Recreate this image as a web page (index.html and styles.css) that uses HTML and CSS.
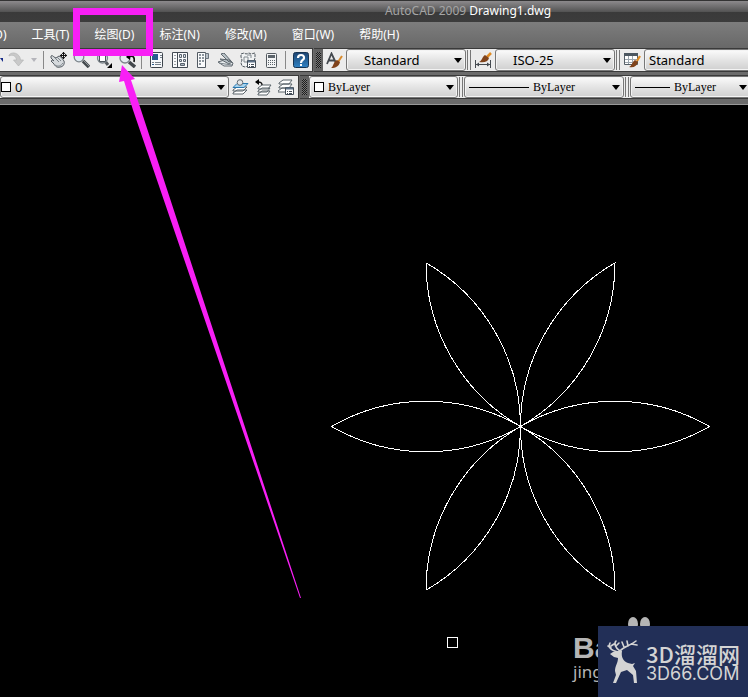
FILE: index.html
```html
<!DOCTYPE html>
<html lang="zh-CN">
<head>
<meta charset="utf-8">
<meta name="viewport" content="width=device-width">
<title>AutoCAD 2009 Drawing1.dwg</title>
<link rel="stylesheet" href="styles.css">
</head>
<body>
<header>
  <h1 class="title"><span class="app">AutoCAD 2009</span> Drawing1.dwg</h1>
  <nav class="menu">
    <button type="button">格式(O)</button>
    <button type="button">工具(T)</button>
    <button type="button">绘图(D)</button>
    <button type="button">标注(N)</button>
    <button type="button">修改(M)</button>
    <button type="button">窗口(W)</button>
    <button type="button">帮助(H)</button>
  </nav>
  <div class="row">
    <div class="bar">
      <button type="button" class="drop clipped" aria-label="Undo list"><svg width="6" height="4"><path fill="#152a88" d="M0 0h6L3 4z"/></svg></button>
      <button type="button" class="tool" aria-label="Redo"><svg width="16" height="16"><path fill="#c9c9c9" stroke="#b4b6b6" stroke-width=".7" d="M1 3C4-1 12 1 12.500 8h3L10.500 14 5.500 8h3C8 4 5 2 1 4z"/></svg></button>
      <button type="button" class="drop" aria-label="Redo list"><svg width="6" height="4"><path fill="#b5b5bb" d="M0 0h6L3 4z"/></svg></button>
      <i class="sep"></i>
      <button type="button" class="tool" aria-label="Pan"><svg width="17" height="17"><path fill="#d5d9dc" stroke="#555c63" d="M1 4c1-1 2 0 3 1l2 1 3-2 2 1 3 4c1 3-1 6-4 6-3 1-5-1-6-3L1 9c1-1 2-1 3 0L1 6z"/><path fill="none" stroke="#7d858b" d="M5 6l4 4M7 5l4 4M5 13c3 2 6 1 8-2"/><path stroke="#111" d="M13.500 0v7M10 3.500h7"/><path fill="#111" d="M11.500 2l2-2 2 2zM11.500 5l2 2 2-2zM12 1.500l-2 2 2 2zM15 1.500l2 2-2 2z"/></svg></button>
      <button type="button" class="tool" aria-label="Zoom realtime"><svg width="17" height="16"><path stroke="#44494d" stroke-width="3.500" d="M10 9l6 6"/><path stroke="#90969a" d="M11 9l5 5"/><circle cx="6" cy="5" r="4.800" fill="#dfebf3" stroke="#7d858b" stroke-width="1.300"/></svg></button>
      <button type="button" class="tool" aria-label="Zoom window"><svg width="17" height="16"><path stroke="#54595d" stroke-width="3" d="M9 9l3 4"/><circle cx="6.500" cy="6" r="5" fill="#e5ebef" stroke="#7d858b" stroke-width="1.300"/><path fill="#fff" stroke="#4e565c" d="M3.500 3.500h6v6h-6z"/><path d="M16 11v5h-5z"/></svg></button>
      <button type="button" class="tool" aria-label="Zoom previous"><svg width="17" height="16"><path stroke="#44494d" stroke-width="3.500" d="M10 10l6 5"/><circle cx="6" cy="6" r="5" fill="#e5ebef" stroke="#7d858b" stroke-width="1.300"/><path fill="none" stroke="#111" stroke-width="1.600" d="M10 5c4-2 6 0 5 5"/><path d="M11 1v7L7 5z"/></svg></button>
      <i class="sep"></i>
      <button type="button" class="tool" aria-label="Properties"><svg width="13" height="16"><rect x=".5" y=".5" width="12" height="15" rx="1" fill="#f7f9fb" stroke="#3d444c"/><path fill="#275b8e" d="M2 2h6v6H2z"/><path stroke="#76808a" d="M10 3.500h2M10 5.500h2M2 10.500h2M5 10.500h6M5 12.500h6"/><path stroke="#275b8e" d="M2 12.500h2"/></svg></button>
      <button type="button" class="tool" aria-label="DesignCenter"><svg width="16" height="16"><path fill="#fafbfc" stroke="#434b54" d="M.500.500h15v15H.500zM5.500.500v15"/><path fill="#dfe5ea" stroke="#59636e" d="M7.500 2.500h2v3h-2zM11.500 2.500h2v3h-2zM7.500 7.500h2v2h-2zM11.500 7.500h2v2h-2z"/><path fill="#a9b5c0" stroke="#59636e" d="M8.500 11.500h4v2h-4z"/><path stroke="#434b54" stroke-dasharray="1 2" d="M3 3v11"/></svg></button>
      <button type="button" class="tool" aria-label="Tool palettes"><svg width="12" height="16"><path fill="#fafbfc" stroke="#535b63" d="M.500.500h8v15h-8z"/><path fill="#b8c0c7" stroke="#6b747d" d="M8.500 1.500h3v5h-3z"/><path fill="#8c959d" d="M2 2h2v2H2zM5 2h2v2H5zM2 5h2v2H2zM5 5h2v2H5zM2 8h2v2H2zM5 8h2v2H5zM2 11h2v2H2z"/></svg></button>
      <button type="button" class="tool" aria-label="Sheet set manager"><svg width="17" height="14"><path fill="#e9edef" stroke="#5e676e" d="M1 9l10-3 5 4-1 3H7z"/><path fill="#bac3c8" stroke="#5e676e" d="M3 6l9 1 3 2-3 2zM4 1l3-1 7 8-2 1z"/><path fill="none" stroke="#7a838a" d="M2 10l6 1 7 1"/></svg></button>
      <button type="button" class="tool" aria-label="Markup set manager"><svg width="17" height="17"><path fill="#f1f3f4" stroke="#515960" stroke-dasharray="3 1" d="M1 2l3-1 2 1 3-1 2 1 4-1v5l-1 3-6 1v4l-3 1-3-1-1-3 1-3-1-3z"/><path fill="none" stroke="#828a90" d="M4 5h4v5H4zM7 3h4v3"/><path fill="#fff" stroke="#434d57" d="M7.500 8.500h8v7h-8z"/><path stroke="#5c7187" stroke-width="2" d="M8 9.500h7"/><path stroke="#434d57" d="M9 12.500h1M11 12.500h3M9 14.500h1M11 14.500h3"/></svg></button>
      <button type="button" class="tool" aria-label="QuickCalc"><svg width="11" height="15"><rect x=".5" y=".5" width="10" height="14" rx="1" fill="#f3f4f5" stroke="#555b61"/><path fill="#5c646b" d="M2 2h7v3H2z"/><path stroke="#5c646b" stroke-width="1" stroke-dasharray="1 1" d="M2 7.500h7M2 9.500h7M2 11.500h7"/></svg></button>
      <i class="sep"></i>
      <button type="button" class="tool" aria-label="Help"><svg width="16" height="16"><defs><linearGradient id="help" x2="0" y2="1"><stop stop-color="#1d4370"/><stop offset="1" stop-color="#2f82c4"/></linearGradient></defs><rect x=".5" y=".5" width="15" height="15" rx="2" fill="url(#help)" stroke="#173453"/><path fill="none" stroke="#fff" stroke-width="2.200" d="M5 6c0-4 6.500-4 6 0 0 2-3 2-3 5"/><path fill="#fff" d="M7 12h2v2H7z"/></svg></button>
    </div>
    <div class="bar grow">
      <i class="grip"></i>
      <button type="button" class="tool" aria-label="Text style"><svg width="17" height="17"><path fill="none" stroke="#43484e" stroke-width="1.800" d="M1 12L5.500 1.500 10 11M3 8.500h6"/><path stroke="#d88a2c" stroke-width="2" d="M16 4l-4 6"/><path fill="#80431b" d="M11 8l3 2c-1 4-4 6-9 6 3-2 2-6 6-8z"/></svg></button>
      <div class="field style"><select aria-label="Text style name"><option>Standard</option></select><svg class="arrow" width="8" height="5"><path d="M0 0h8L4 5z"/></svg></div>
      <i class="rails"></i>
      <button type="button" class="tool" aria-label="Dimension style"><svg width="17" height="16"><path stroke="#454a50" d="M.500 8v8M15.500 8v8M1 12.500h14"/><path fill="#454a50" d="M1 12.500l3-2v4zM15 12.500l-3-2v4z"/><path stroke="#e08b22" stroke-width="2.500" d="M16 1l-4 4"/><path fill="#80431b" d="M10 3l4 3c-1 4-5 5-10 4 3-1 3-5 6-7z"/></svg></button>
      <div class="field style"><select aria-label="Dimension style name"><option>ISO-25</option></select><svg class="arrow" width="8" height="5"><path d="M0 0h8L4 5z"/></svg></div>
      <i class="rails"></i>
      <button type="button" class="tool" aria-label="Table style"><svg width="17" height="16"><path fill="#fff" stroke="#555e66" d="M.500 1.500h13v11H.500z"/><path fill="#4c5760" d="M0 1h14v3H0z"/><path stroke="#9ba5ad" d="M4.500 4v8M8.500 4v8M1 7.500h12M1 10.500h12"/><path stroke="#e08b22" stroke-width="2.200" d="M16 4l-3 5"/><path fill="#80431b" d="M11 8l3 2c-1 4-4 6-9 5 3-1 3-5 6-7z"/></svg></button>
      <div class="field last"><select aria-label="Table style name"><option>Standard</option></select></div>
    </div>
  </div>
  <div class="row">
    <div class="bar">
      <div class="field layer"><i class="swatch"></i><select aria-label="Layer"><option>0</option></select><svg class="arrow" width="8" height="5"><path d="M0 0h8L4 5z"/></svg></div>
      <button type="button" class="tool" aria-label="Make object's layer current"><svg width="17" height="17"><path fill="#fff" stroke="#5b646b" d="M1 14l4-3h10l-4 4H1zM1 11l4-3h10l-4 4H1z"/><path fill="#a7d3ee" stroke="#2878b0" d="M1 8.500l4-4h11l-4 4z"/><circle cx="8" cy="3.500" r="2.800" fill="#e3e6e8" stroke="#646c73"/></svg></button>
      <button type="button" class="tool" aria-label="Layer previous"><svg width="17" height="17"><path fill="#fff" stroke="#5b646b" d="M3 15l4-3h8l-3 4H3zM3 12l4-3h8l-3 4H3zM3 9l4-3h9l-3 4H3z"/><path fill="none" stroke="#111" stroke-width="1.300" d="M7 6c0-2-1-3-4-3"/><path d="M4 0v6L0 3z"/></svg></button>
      <button type="button" class="tool" aria-label="Layer states"><svg width="17" height="17"><path fill="#fff" stroke="#5b646b" d="M0 12l4-3h9l-3 4H0zM1 8l4-3h9l-3 4H1zM1 4l4-3h9l-3 4H1z"/><path fill="#fff" stroke="#434d57" d="M7.500 8.500h8v7h-8z"/><path stroke="#5c7187" stroke-width="2" d="M8 9.500h7"/><path stroke="#434d57" d="M9 12.500h1M11 12.500h3M9 14.500h1M11 14.500h3"/></svg></button>
    </div>
    <div class="bar grow serif">
      <i class="grip"></i>
      <div class="field color"><i class="swatch"></i><select aria-label="Color"><option>ByLayer</option></select><svg class="arrow" width="8" height="5"><path d="M0 0h8L4 5z"/></svg></div>
      <i class="rails"></i>
      <div class="field linetype"><i class="line"></i><select aria-label="Linetype"><option>ByLayer</option></select><svg class="arrow" width="8" height="5"><path d="M0 0h8L4 5z"/></svg></div>
      <i class="rails"></i>
      <div class="field last"><i class="line short"></i><select aria-label="Lineweight"><option>ByLayer</option></select><svg class="arrow" width="8" height="5"><path d="M0 0h8L4 5z"/></svg></div>
    </div>
  </div>
</header>
<main class="canvas">
  <svg class="flower" width="381" height="331" viewBox="-190.500 -165.500 381 331" role="img" aria-label="Six-petal flower">
    <defs><path id="petal" d="M0 0A189 189 0 0 1 189 0A189 189 0 0 1 0 0"/></defs>
    <use href="#petal"/><use href="#petal" transform="rotate(60)"/><use href="#petal" transform="rotate(120)"/><use href="#petal" transform="rotate(180)"/><use href="#petal" transform="rotate(240)"/><use href="#petal" transform="rotate(300)"/>
  </svg>
  <i class="pickbox"></i>
  <div class="baidu">
    <svg width="24" height="18"><ellipse cx="6" cy="8" rx="5" ry="7"/><ellipse cx="18" cy="8" rx="5" ry="7"/></svg>
    <b>Ba</b><span>jing</span>
  </div>
  <div class="brand">
    <svg width="34" height="46" viewBox="0 0 34 46"><path fill="#d4d4d4" d="M12 12L7 13 4 15l4 3 4 1c0 5-3 8-3 13l1 4-3 8h3l5-11 6-2 6 5 1 8h3l-1-12-3-5 2-3-3 1-4-1c-5-2-7-6-6-12z"/><path fill="none" stroke="#d4d4d4" stroke-width="1.600" stroke-linecap="round" d="M12 13C4 11 2 8 4 4M5 9L2 7M14 12C9 9 8 4 10 2M10 7L13 4M14 12c4-5 10-5 16-10M18 8l-2-5M22 7l-1-5M25 5l6 1M5 7l3-2"/></svg>
    <div class="words"><strong>3D溜溜网</strong><span>3D66.COM</span></div>
  </div>
</main>
<svg class="callout" width="310" height="600" aria-hidden="true"><path fill="none" stroke="#f81ff5" stroke-width="7" d="M76.500 11.500h73v41h-73z"/><path fill="#f81ff5" d="M122 65l13 14-4 1 10 30L301 598h-1L133 110l-9-29-5 1z"/></svg>
</body>
</html>
```
FILE: styles.css
```css
* { box-sizing: border-box; }

body {
  margin: 0;
  min-height: 100vh;
  display: flex;
  flex-direction: column;
  position: relative;
  overflow: hidden;
  background: #000;
  font: 13px "Noto Sans", "Noto Sans CJK SC", sans-serif;
}

button, select {
  font: inherit;
  border: 0;
  padding: 0;
  margin: 0;
  background: none;
  appearance: none;
}

header {
  background: #6b6b6b;
  border-bottom: 1px solid #999;
  padding-bottom: 5px;
}

.title {
  margin: 0;
  height: 22px;
  padding-left: 188px;
  border-top: 1px solid #333;
  background: linear-gradient(#8c8a8c, #555 50%, #3a3a3a 52%, #3c3c3c);
  color: #fff;
  font-size: 12px;
  font-weight: 400;
  line-height: 20px;
  text-align: center;
}

.app { color: #a5a5a5; }

.menu {
  display: flex;
  gap: 25px;
  height: 26px;
  padding-left: 0;
  margin-left: -34px;
  background: linear-gradient(#7d7d7d, #686868);
  color: #fff;
  font-size: 12px;
}

.menu button {
  color: inherit;
  white-space: nowrap;
  line-height: 24px;
}

.row {
  display: flex;
  gap: 1px;
  overflow: hidden;
}

.row + .row { margin-top: 3px; }

.bar {
  display: flex;
  flex: none;
  align-items: center;
  height: 24px;
  border: solid #3a3a3a;
  border-width: 1px 1px 1px 0;
  background: #ececec;
}

.grow { flex: 1 0 0; border-right: 0; }

.tool {
  flex: none;
  display: flex;
  align-items: center;
  justify-content: center;
  width: 23px;
  height: 22px;
}

.drop {
  display: flex;
  justify-content: center;
  width: 14px;
}

.clipped { width: 4px; justify-content: flex-end; overflow: hidden; padding-right: 1px; }

.sep {
  width: 6px;
  height: 18px;
  border: solid transparent;
  border-width: 0 3px 0 2px;
  background: #888;
  background-clip: padding-box;
}

.grip {
  flex: none;
  align-self: stretch;
  width: 9px;
  border: solid #626262;
  border-width: 3px 2px;
  background: repeating-conic-gradient(#1c1c1c 0 25%, #777 0 50%) 0 0 / 2px 2px;
}

.rails {
  flex: none;
  width: 6px;
  height: 20px;
  border: solid #ececec;
  border-width: 0 1px;
  background: linear-gradient(90deg, #777 1px, #ececec 1px 3px, #777 3px);
}

.field {
  flex: none;
  display: flex;
  align-items: center;
  height: 22px;
  border: 1px solid #777;
  border-radius: 3px;
  background: linear-gradient(#fbfbfb, #e4e4e4 50%, #d0d0d0);
  box-shadow: inset 0 0 0 1px #f3f3f3;
}

.field select {
  flex: 1;
  min-width: 0;
  height: 20px;
  color: #000;
}

.arrow { flex: none; margin-right: 3px; pointer-events: none; }

.style { width: 120px; padding-left: 17px; }
.layer { width: 229px; }
.color { width: 149px; padding-left: 4px; }
.linetype { width: 160px; padding-left: 4px; }
.last { flex: 1 0 121px; padding-left: 4px; }

.swatch {
  flex: none;
  width: 10px;
  height: 10px;
  margin-right: 4px;
  border: 1px solid #000;
  background: #fff;
}

.line {
  flex: none;
  width: 60px;
  height: 1px;
  margin-right: 4px;
  background: #000;
}

.short { width: 35px; }

.serif { font-family: "Liberation Serif", serif; font-size: 12px; }

.canvas {
  flex: 1;
  position: relative;
  min-height: 592px;
  overflow: hidden;
}

.flower {
  position: absolute;
  left: 330px;
  top: 156px;
  fill: none;
  stroke: #fff;
  shape-rendering: crispEdges;
}

.pickbox {
  position: absolute;
  left: 447px;
  top: 532px;
  width: 11px;
  height: 11px;
  border: 1px solid #fff;
}

.baidu {
  position: absolute;
  right: 97px;
  bottom: 15px;
  width: 78px;
  display: flex;
  flex-direction: column;
  color: #b5b5b5;
  font: 17px "Noto Sans", sans-serif;
  line-height: 20px;
}

.baidu svg { align-self: flex-end; fill: #b5b5b5; }
.baidu b { font: 700 30px "Liberation Sans", sans-serif; line-height: 28px; }

.brand {
  position: absolute;
  right: 0;
  bottom: 0;
  display: flex;
  align-items: center;
  gap: 6px;
  width: 150px;
  height: 71px;
  padding-left: 8px;
  background: #222f57;
  color: #d4d4d4;
}

.words { display: flex; flex-direction: column; white-space: nowrap; }
.words strong { font: 500 22px "Noto Sans CJK SC", sans-serif; line-height: 24px; }
.words span { font: 18px Inter, sans-serif; line-height: 18px; }

.callout {
  position: absolute;
  left: 0;
  top: 0;
  pointer-events: none;
}
```
